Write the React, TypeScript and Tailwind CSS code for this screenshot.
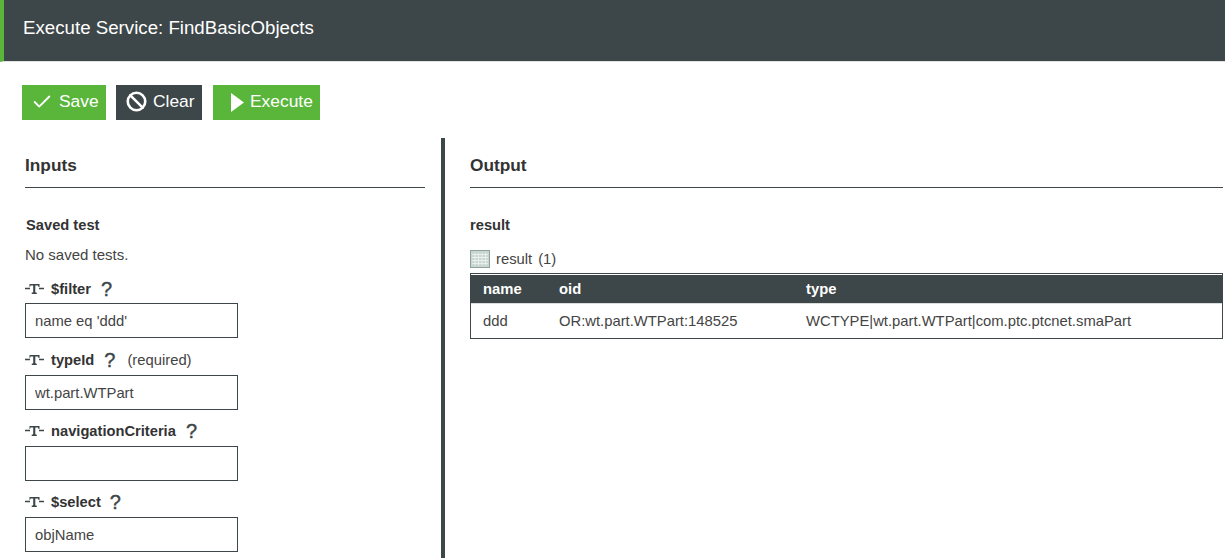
import { Ban, Check } from "lucide-react";
import type { ReactNode } from "react";

const font = { fontFamily: '"Liberation Sans", Arial, sans-serif' };

function TypeIcon() {
  return (
    <svg width="19" height="10" viewBox="0 0 19 10" className="shrink-0 text-[#3d4648]">
      <path d="M0 4.500h5M14 4.500h5" stroke="currentColor" strokeWidth="1.4" />
      <path d="M4.500 0h10v3h-1l-.5-1.500h-2.700v6.800l1.500.5V10H6.700v-1.200l1.500-.5V1.500H5.500L5 3H4.500z" fill="currentColor" />
    </svg>
  );
}

function ParamField({
  name,
  value,
  gap,
  required,
  inputTop = "mt-1",
}: {
  name: string;
  value: string;
  gap: string;
  required?: boolean;
  inputTop?: string;
}) {
  return (
    <div>
      <div className="flex h-[22px] items-center">
        <TypeIcon />
        <span className="ml-[7px] text-[14.7px] font-bold text-[#333]">{name}</span>
        <span className={`${gap} text-[20px] leading-none font-medium text-[#3d4648] [-webkit-text-stroke:0.4px_#3d4648]`}>?</span>
        {required && <span className="ml-[12px] text-[14.8px] text-[#444]">(required)</span>}
      </div>
      <input
        readOnly
        value={value}
        className={`${inputTop} block h-[35px] w-[213px] border border-[#3d4648] bg-white px-[9px] text-[14.8px] text-[#444] outline-none`}
      />
    </div>
  );
}

function ActionButton({ color, icon, label, className }: { color: string; icon: ReactNode; label: string; className: string }) {
  return (
    <button type="button" className={`flex h-[35px] items-center pb-[2px] text-[17.4px] text-white ${color} ${className}`}>
      {icon}
      {label}
    </button>
  );
}

function GridIcon() {
  return (
    <svg width="20" height="18" viewBox="0 0 20 18" className="shrink-0">
      <rect x="0.5" y="0.5" width="19" height="17" fill="#c9d6d1" stroke="#8fa39d" />
      <path
        d="M2 4.500h16M2 7.500h16M2 10.500h16M2 13.500h16M5 3v12M8.500 3v12M12 3v12M15.500 3v12"
        stroke="#e9efec"
        strokeWidth="1"
      />
    </svg>
  );
}

export default function App() {
  return (
    <div style={font} className="h-[558px] w-[1225px] overflow-hidden bg-white text-[#333]">
      <header className="flex h-[62px] items-center border-b border-[#e2e2e2] border-l-4 border-l-[#5ab63b] bg-[#3d4648] pb-[5px] pl-[19px]">
        <h1 className="text-[18.7px] leading-none text-white">Execute Service: FindBasicObjects</h1>
      </header>

      <div className="flex pt-[23px] pl-[22px]">
        <ActionButton
          color="bg-[#5ab63b]"
          icon={<Check className="mr-[6px] ml-[9px]" size={22} strokeWidth={2} />}
          label="Save"
          className="w-[84px]"
        />
        <ActionButton
          color="ml-[10px] bg-[#3d4648]"
          icon={<Ban className="mr-[6px] ml-[10px]" size={21} strokeWidth={3} />}
          label="Clear"
          className="w-[86px]"
        />
        <ActionButton
          color="ml-[11px] bg-[#5ab63b]"
          icon={
            <svg width="13" height="19" viewBox="0 0 13 19" className="mr-[6px] ml-[18px] mt-[2px] fill-white">
              <path d="M0 0l13 9.500L0 19z" />
            </svg>
          }
          label="Execute"
          className="w-[107px]"
        />
      </div>

      <div className="mt-[18px] flex">
        <section className="h-[420px] w-[445px] shrink-0 border-r-4 border-[#3d4648] pl-[25px]">
          <h2 className="flex h-[50px] w-[400px] items-center border-b border-[#3d4648] pt-[6px] text-[17.3px] font-bold">
            Inputs
          </h2>
          <div className="mt-[27px] ml-px text-[14.7px] leading-5 font-bold">Saved test</div>
          <div className="mt-[10px] text-[15px] leading-5 text-[#444]">No saved tests.</div>
          <div className="mt-[13px] flex flex-col gap-[10px]">
            <div className="mb-px">
              <ParamField name="$filter" value="name eq 'ddd'" gap="ml-[10px]" inputTop="mt-[3px]" />
            </div>
            <ParamField name="typeId" value="wt.part.WTPart" gap="ml-[10px]" required />
            <ParamField name="navigationCriteria" value="" gap="ml-[10px]" />
            <ParamField name="$select" value="objName" gap="ml-[9px]" />
          </div>
        </section>

        <section className="w-[778px] shrink-0 pl-[25px]">
          <h2 className="flex h-[50px] items-center border-b border-[#3d4648] pt-[6px] text-[17.3px] font-bold">Output</h2>
          <div className="mt-[27px] text-[14.7px] leading-5 font-bold">result</div>
          <div className="mt-[14px] flex h-5 items-center text-[14.8px] text-[#444]">
            <GridIcon />
            <span className="ml-[6px]">result</span>
            <span className="ml-[6px]">(1)</span>
          </div>
          <div className="mt-[4px] border border-[#3d4648] pt-px">
            <table className="w-full text-[14.8px] leading-5">
              <thead className="bg-[#3d4648] text-white">
                <tr className="h-[28px]">
                  <th className="w-[88px] pl-3 text-left font-bold">name</th>
                  <th className="w-[247px] text-left font-bold">oid</th>
                  <th className="text-left font-bold">type</th>
                </tr>
              </thead>
              <tbody className="text-[#444]">
                <tr className="h-[35px] border-t border-[#dcdcdc]">
                  <td className="pt-px pl-3">ddd</td>
                  <td className="pt-px">OR:wt.part.WTPart:148525</td>
                  <td className="pt-px">WCTYPE|wt.part.WTPart|com.ptc.ptcnet.smaPart</td>
                </tr>
              </tbody>
            </table>
          </div>
        </section>
      </div>
    </div>
  );
}
